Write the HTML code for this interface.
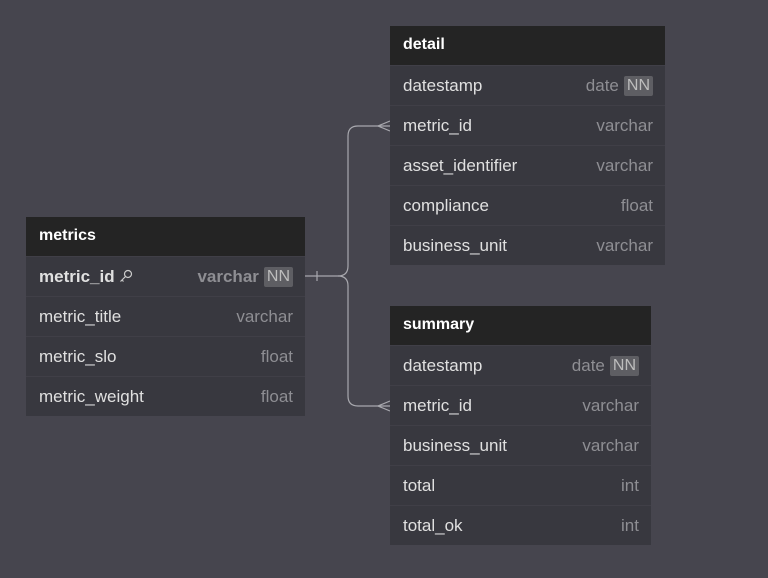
<!DOCTYPE html><html><head><style>
body{margin:0;width:768px;height:578px;background:#46454e;font-family:"Liberation Sans",sans-serif;position:relative;overflow:hidden}
.t{position:absolute;background:#38383f;}
.h{height:39px;background:#242424;color:#fff;font-weight:bold;font-size:16px;line-height:37px;padding-left:13px}
.r{height:40px;border-top:1px solid #403f47;box-sizing:border-box;display:flex;align-items:center;padding:0 12px 0 13px;font-size:17px;color:#e0e0e0}
.r span.n{flex:1}
.r span.ty{color:#8e8e93}
.nn{background:#5e5e63;color:#bdbdbd;padding:1px 3px;margin-left:5px;border-radius:2px;font-size:16px}
</style></head><body>
<svg width="768" height="578" style="position:absolute;left:0;top:0" fill="none" stroke="#a8a8ae" stroke-width="1.2">
<path d="M305 276 H338 Q348 276 348 266 V136 Q348 126 358 126 H390"/>
<path d="M338 276 Q348 276 348 286 V396 Q348 406 358 406 H390"/>
<path d="M317 271 V281"/>
<path d="M390 121 L378 126 L390 131 M390 401 L378 406 L390 411"/>
</svg>
<div class="t" style="left:26px;top:217px;width:279px">
<div class="h">metrics</div>
<div class="r" style="font-weight:bold"><span class="n">metric_id <svg width="14" height="14" viewBox="0 0 14 14" style="vertical-align:-1px" fill="none" stroke="#ccc" stroke-width="1.2"><circle cx="9" cy="5" r="3.5"/><path d="M6.5 7.5 L1.5 12.5 M3 11 L4.5 12.5"/></svg></span><span class="ty">varchar</span><span class="nn" style="font-weight:normal">NN</span></div>
<div class="r"><span class="n">metric_title</span><span class="ty">varchar</span></div>
<div class="r"><span class="n">metric_slo</span><span class="ty">float</span></div>
<div class="r"><span class="n">metric_weight</span><span class="ty">float</span></div>
</div>
<div class="t" style="left:390px;top:26px;width:275px">
<div class="h">detail</div>
<div class="r"><span class="n">datestamp</span><span class="ty">date</span><span class="nn">NN</span></div>
<div class="r"><span class="n">metric_id</span><span class="ty">varchar</span></div>
<div class="r"><span class="n">asset_identifier</span><span class="ty">varchar</span></div>
<div class="r"><span class="n">compliance</span><span class="ty">float</span></div>
<div class="r"><span class="n">business_unit</span><span class="ty">varchar</span></div>
</div>
<div class="t" style="left:390px;top:306px;width:261px">
<div class="h">summary</div>
<div class="r"><span class="n">datestamp</span><span class="ty">date</span><span class="nn">NN</span></div>
<div class="r"><span class="n">metric_id</span><span class="ty">varchar</span></div>
<div class="r"><span class="n">business_unit</span><span class="ty">varchar</span></div>
<div class="r"><span class="n">total</span><span class="ty">int</span></div>
<div class="r"><span class="n">total_ok</span><span class="ty">int</span></div>
</div>
</body></html>
